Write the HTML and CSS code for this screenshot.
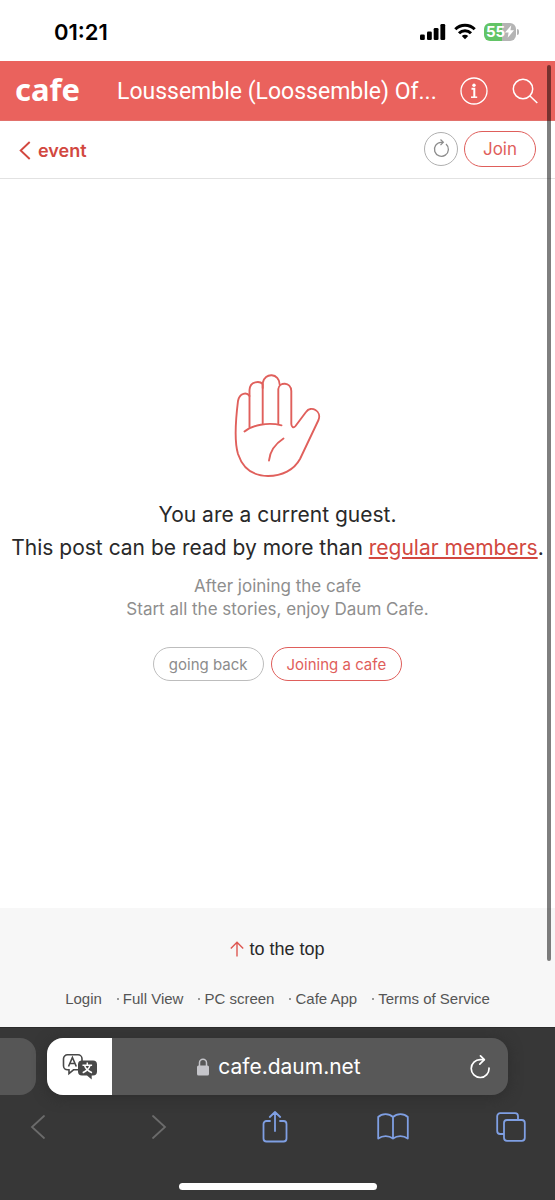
FILE: index.html
```
<!DOCTYPE html>
<html lang="en">
<head>
<meta charset="utf-8">
<meta name="viewport" content="width=device-width, initial-scale=1">
<title>Daum Cafe</title>
<link rel="stylesheet" href="styles.css">
</head>
<body>
<div class="status">
  <time class="status-time">01:21</time>
  <div class="status-icons">
    <svg width="27" height="18" viewBox="0 0 27 18" fill="#000"><rect x="1" y="11.500" width="4.800" height="5.500" rx="1.300"/><rect x="8" y="8.500" width="4.800" height="8.500" rx="1.300"/><rect x="14.700" y="5" width="4.800" height="12" rx="1.300"/><rect x="21.400" y="1" width="4.800" height="16" rx="1.300"/></svg>
    <svg width="22" height="17" viewBox="0 0 22 17" fill="none" stroke="#000" stroke-width="3"><path d="M1.300 6.200a13.800 13.800 0 0 1 19.400 0"/><path d="M5 10.300a8.500 8.500 0 0 1 12 0"/><path d="M11 16.200 7.800 13a4.600 4.600 0 0 1 6.400 0z" fill="#000" stroke="none"/></svg>
    <div class="battery"><span class="battery-level">55</span><svg width="9" height="13" viewBox="0 0 10 14" fill="#fff"><path d="M7 0 0 8h4L3 14l7-8.500H6z"/></svg></div>
  </div>
</div>
<header class="header">
  <a class="logo" href="#">cafe</a>
  <h1 class="title">Loussemble (Loossemble) Of...</h1>
  <button class="icon-btn" aria-label="Information"><svg width="28" height="28" viewBox="0 0 28 28" fill="none" stroke="#fff" stroke-width="1.300"><circle cx="14" cy="14" r="13"/><circle cx="14" cy="8.200" r="1.700" fill="#fff" stroke="none"/><path d="M11.500 11.700H14.300V20" stroke-width="2"/><path d="M11 20.200h6.200" stroke-width="1.500"/></svg></button>
  <button class="icon-btn" aria-label="Search"><svg width="26" height="26" viewBox="0 0 26 26" fill="none" stroke="#fff" stroke-width="1.500"><circle cx="11" cy="11" r="9.700"/><path d="M18 18l7.300 7"/></svg></button>
</header>
<nav class="subnav">
  <a class="back" href="#"><svg width="12" height="19" viewBox="0 0 12 19" fill="none" stroke="#d2483f" stroke-width="1.900"><path d="M10.700 1 1.700 9.500l9 8.500"/></svg>event</a>
  <button class="refresh" aria-label="Refresh"><svg width="18" height="20" viewBox="0 0 18 20" fill="none" stroke="#8c8c8c" stroke-width="1.300"><path d="M11 3.300H9A7 7 0 1 0 14 5"/><path d="M8.500.5 11.300 3.300 8.500 6.100"/></svg></button>
  <button class="pill pill-red join">Join</button>
</nav>
<main class="main">
  <svg class="hand" width="88" height="104" viewBox="0 0 88 104" fill="none" stroke="#e0605c" stroke-width="1.900" stroke-linecap="round" stroke-linejoin="round"><path d="M10.500 57.500C18 51 34 48 47.500 51.300"/><path d="M15.500 53V22C13 18 5.500 18.500 4 27C1.500 47 0 67 4 80C9 95 20 102 34 102C48 102 60 96 66 85L84.500 46C88 37 77 31 72 38L61.500 52C59.500 54.500 57.500 53 57.300 50V17C57 7.500 45 8 44.300 15V50"/><path d="M15.500 22V16C16 6.500 26 7 28.700 10V49.500"/><path d="M28.700 14V9C30.500-2 45.500-1 45.700 10.500"/><path d="M49.500 64.500C41 70 36 77 35 86.500"/></svg>
  <h2 class="message">You are a current guest.<br>This post can be read by more than <a href="#">regular members</a>.</h2>
  <p class="note">After joining the cafe<br>Start all the stories, enjoy Daum Cafe.</p>
  <div class="actions">
    <button class="pill">going back</button>
    <button class="pill pill-red">Joining a cafe</button>
  </div>
</main>
<footer class="footer">
  <a class="to-top" href="#"><svg width="14" height="16" viewBox="0 0 14 16" fill="none" stroke="#dd5752" stroke-width="1.400"><path d="M7 15.500V1.500M.8 7.500 7 1.300l6.200 6.200"/></svg>to the top</a>
  <ul class="links">
    <li><a href="#">Login</a></li>
    <li><a href="#">Full View</a></li>
    <li><a href="#">PC screen</a></li>
    <li><a href="#">Cafe App</a></li>
    <li><a href="#">Terms of Service</a></li>
  </ul>
</footer>
<div class="browser">
  <div class="tabs">
    <div class="prev-tab"></div>
    <div class="address">
      <button class="translate" aria-label="Translate"><svg width="36" height="28" viewBox="0 0 36 28"><path d="M5.500 1.800h10.500a4 4 0 0 1 4 4v7a4 4 0 0 1-4 4h-4.500L7 20.500v-3.700H5.500a4 4 0 0 1-4-4v-7a4 4 0 0 1 4-4z" fill="#fff" stroke="#484848" stroke-width="1.600"/><path d="M6.500 13.500 10.400 4.500l3.900 9M8 10.500h5" fill="none" stroke="#484848" stroke-width="1.600"/><path d="M20 7.500h11a4 4 0 0 1 4 4v7a4 4 0 0 1-4 4h-1.300v4L25 22.500h-5a4 4 0 0 1-4-4v-7a4 4 0 0 1 4-4z" fill="#484848"/><path d="M25.300 9.500v2.500M20.500 12.200h9.600M28 12.500c-1 3.500-3.500 5.500-7.300 7.200M22.600 12.500c1 3.500 3.500 5.500 7.400 7.200" fill="none" stroke="#fff" stroke-width="1.500"/></svg></button>
      <div class="host"><svg width="12" height="18" viewBox="0 0 12 18"><rect y="7.500" width="12" height="10" rx="1.500" fill="#c5c5ca"/><path d="M2.500 8V4.800a3.500 3.500 0 0 1 7 0V8" fill="none" stroke="#c5c5ca" stroke-width="1.500"/></svg><span>cafe.daum.net</span></div>
      <button class="reload" aria-label="Reload"><svg width="20" height="24" viewBox="0 0 20 24" fill="none" stroke="#fff" stroke-width="1.700" stroke-linecap="round" stroke-linejoin="round"><path d="M14 4.700H10.500A8.900 8.900 0 1 0 19 13"/><path d="M10.500.9 14.300 4.700 9.800 9.200"/></svg></button>
    </div>
  </div>
  <div class="toolbar">
    <button aria-label="Back"><svg width="28" height="32" viewBox="0 0 28 32" fill="none" stroke="#6b6b6b" stroke-width="1.800" stroke-linecap="round"><path d="M20 5 8 16l12 11"/></svg></button>
    <button aria-label="Forward"><svg width="28" height="32" viewBox="0 0 28 32" fill="none" stroke="#6b6b6b" stroke-width="1.800" stroke-linecap="round"><path d="M11 5l12 11L11 27"/></svg></button>
    <button aria-label="Share"><svg width="28" height="32" viewBox="0 0 28 32" fill="none" stroke="#7f9fe3" stroke-width="1.800" stroke-linecap="round" stroke-linejoin="round"><path d="M9 10H5.500A3 3 0 0 0 2.500 13V27.500a3 3 0 0 0 3 3h17a3 3 0 0 0 3-3V13a3 3 0 0 0-3-3H19M14 20V1.200M8.800 6 14 1l5.200 5"/></svg></button>
    <button aria-label="Bookmarks"><svg width="32" height="32" viewBox="0 0 32 32" fill="none" stroke="#7f9fe3" stroke-width="1.800" stroke-linejoin="round"><path d="M16 6C12 2.200 5 2.200 1.200 6v21.500c4.500-3.300 10.500-3.300 14.800 0 4.300-3.300 10.300-3.300 14.800 0V6C27 2.200 20 2.200 16 6zV27.500"/></svg></button>
    <button aria-label="Tabs"><svg width="30" height="30" viewBox="0 0 30 30" fill="none" stroke="#7f9fe3" stroke-width="1.800"><path d="M8 22H4.200A3 3 0 0 1 1.200 19V4.200a3 3 0 0 1 3-3H19a3 3 0 0 1 3 3V8"/><rect x="8" y="8" width="20.800" height="20.800" rx="3"/></svg></button>
  </div>
  <div class="home-bar"></div>
</div>
<div class="scroll-thumb"></div>
</body>
</html>
```
FILE: styles.css
```
* { box-sizing: border-box; }
body {
  margin: 0;
  min-height: 100vh;
  display: flex;
  flex-direction: column;
  position: relative;
  background: #fff;
  color: #292929;
  font-family: Inter, "Liberation Sans", sans-serif;
}
a { color: inherit; text-decoration: none; }
button { padding: 0; border: 0; background: none; font: inherit; color: inherit; }
svg { display: block; flex: none; }

.status {
  height: 61px;
  padding: 2px 39px 0 54px;
  display: flex;
  align-items: center;
  justify-content: space-between;
}
.status-time { font-size: 22px; font-weight: 600; color: #000; }
.status-icons { display: flex; align-items: center; gap: 8px; }
.battery {
  position: relative;
  width: 32px;
  height: 18px;
  border-radius: 6px;
  display: flex;
  align-items: center;
  justify-content: center;
  color: #fff;
  background: linear-gradient(90deg, #62c466 55%, #b4b4b4 55%);
}
.battery::after {
  content: "";
  position: absolute;
  right: -3px;
  top: 6px;
  width: 2px;
  height: 6px;
  border-radius: 0 2px 2px 0;
  background: #b4b4b4;
}
.battery-level { font-size: 15px; font-weight: 700; }

.header {
  height: 60px;
  padding: 0 17px 0 15px;
  display: flex;
  align-items: center;
  background: #ea625d;
  border-bottom: 1px solid #e2716c;
  color: #fff;
}
.logo { flex: none; width: 102px; padding-bottom: 4px; font: 700 31px/40px "Noto Sans", sans-serif; }
.title {
  flex: 1;
  margin: 0;
  padding-top: 3px;
  white-space: nowrap;
  font: 400 23px/34px Roboto, sans-serif;
}
.icon-btn + .icon-btn { margin-left: 24px; }

.subnav {
  height: 58px;
  padding: 0 19px 2px;
  display: flex;
  align-items: center;
  gap: 6px;
  border-bottom: 1px solid #e2e2e2;
}
.back {
  margin-right: auto;
  padding-top: 3px;
  display: flex;
  align-items: center;
  gap: 7px;
  font-size: 18px;
  font-weight: 600;
  color: #d2483f;
}
.refresh {
  width: 34px;
  height: 34px;
  border: 1px solid #b0b0b0;
  border-radius: 50%;
  display: grid;
  place-items: center;
}
.pill {
  height: 34px;
  padding: 0 15px;
  border: 1px solid #bdbdbd;
  border-radius: 18px;
  font-size: 15px;
  color: #8c8c8c;
}
.pill-red { border-color: #df5e5b; color: #df5e5b; }
.join { height: 36px; padding: 0 18px; font-size: 17px; }

.main {
  flex: 1;
  padding: 195px 0 40px;
  display: flex;
  flex-direction: column;
  align-items: center;
  text-align: center;
}
.message { margin: 20px 0 0; font-size: 21px; line-height: 33px; font-weight: 400; }
.message a { color: #d2483f; text-decoration: underline; }
.note { margin: 11px 0 0; font-size: 17px; line-height: 23px; color: #8e8e8e; }
.actions { margin-top: 26px; display: flex; gap: 7px; }

.footer {
  height: 119px;
  padding-top: 30px;
  background: #f7f7f7;
  display: flex;
  flex-direction: column;
  align-items: center;
  gap: 28px;
  font-family: "Liberation Sans", sans-serif;
}
.to-top { display: flex; align-items: center; gap: 5px; font-size: 18px; line-height: 22px; }
.links {
  margin: 0;
  padding: 0;
  display: flex;
  gap: 15px;
  list-style: none;
  font-size: 15px;
  line-height: 22px;
  color: #555;
}
.links li { display: flex; align-items: center; gap: 4px; }
.links li + li::before { content: ""; width: 2px; height: 2px; background: #999; }

.browser { background: #373737; border-top: 1px solid #2c2c2c; padding-top: 10px; height: 173px; display: flex; flex-direction: column; }
.tabs { display: flex; gap: 11px; padding-right: 47px; }
.prev-tab { width: 36px; height: 57px; border-radius: 0 16px 16px 0; background: #565656; }
.address {
  flex: 1;
  height: 57px;
  display: flex;
  align-items: center;
  border-radius: 16px;
  overflow: hidden;
  background: #585858;
  color: #fff;
  box-shadow: 0 2px 14px #2d2d2d;
}
.translate { width: 65px; height: 57px; background: #fff; display: grid; place-items: center; }
.host { flex: 1; padding-right: 24px; display: flex; align-items: center; justify-content: center; gap: 9px; font-size: 21px; }
.reload { margin-right: 18px; }
.toolbar { display: flex; justify-content: space-between; align-items: center; padding: 0 29px 0 23px; margin-top: 16px; }
.toolbar button { width: 30px; display: grid; justify-content: center; align-items: center; }
.home-bar { width: 198px; height: 7px; margin: auto auto 10px; border-radius: 4px; background: #fff; }

.scroll-thumb {
  position: absolute;
  top: 65px;
  right: 4px;
  width: 4px;
  height: 896px;
  border-radius: 2px;
  background: rgba(0, 0, 0, 0.5);
}
```
